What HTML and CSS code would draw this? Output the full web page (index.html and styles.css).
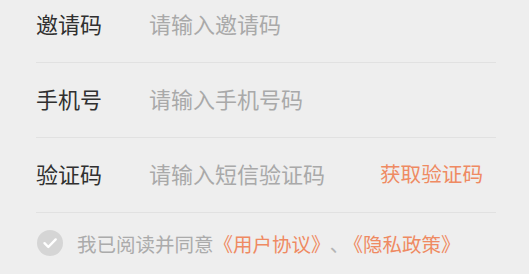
FILE: index.html
```html
<!DOCTYPE html>
<html lang="zh-CN">
<head>
<meta charset="utf-8">
<title>注册</title>
<link rel="stylesheet" href="styles.css">
</head>
<body>
<div class="form">
  <div class="row first">
    <label class="label">邀请码</label>
    <input class="field" type="text" placeholder="请输入邀请码">
  </div>
  <div class="row">
    <label class="label">手机号</label>
    <input class="field" type="tel" placeholder="请输入手机号码">
  </div>
  <div class="row">
    <label class="label">验证码</label>
    <input class="field" type="text" placeholder="请输入短信验证码">
    <span class="code-btn">获取验证码</span>
  </div>
  <div class="agree">
    <span class="check">
      <svg width="26" height="26" viewBox="0 0 26 26"><circle cx="13" cy="13" r="13" fill="#d5d5d5"/><path d="M7.5 13.2l3.8 3.8 7.4-7.6" fill="none" stroke="#fff" stroke-width="2.4" stroke-linecap="round" stroke-linejoin="round"/></svg>
    </span>
    <span class="agree-text">我已阅读并同意<span class="link">《用户协议》</span><span class="sep">、</span><span class="link">《隐私政策》</span></span>
  </div>
</div>
</body>
</html>
```

FILE: styles.css
```css
html, body {
  margin: 0;
  padding: 0;
  background: #eeeeee;
  height: 100%;
}
body {
  font-family: "Noto Sans CJK SC", "Noto Sans", sans-serif;
  overflow: hidden;
}
.form {
  padding: 0 33px 0 36px;
}
.row {
  display: flex;
  align-items: center;
  height: 74px;
  border-bottom: 1px solid #e1e1e1;
}
.row.first {
  margin-top: -12px;
}
.label {
  width: 113px;
  flex: none;
  font-size: 22px;
  line-height: 30px;
  padding-bottom: 4px;
  color: #303030;
}
.field {
  flex: 1;
  min-width: 0;
  border: none;
  outline: none;
  background: transparent;
  padding: 0 0 4px;
  font-family: inherit;
  font-size: 22px;
  line-height: 30px;
  color: #303030;
}
.field::placeholder {
  color: #a9a9a9;
}
.code-btn {
  flex: none;
  font-size: 20.6px;
  line-height: 30px;
  padding-bottom: 4px;
  color: #ef8a62;
  margin-right: 13px;
}
.agree {
  display: flex;
  align-items: center;
  height: 60px;
}
.check {
  display: flex;
  width: 26px;
  height: 26px;
  margin-left: 1px;
  margin-right: 14px;
}
.agree-text {
  font-size: 19.5px;
  color: #ababab;
  white-space: nowrap;
}
.link {
  color: #ef8a62;
}
.sep {
  color: #b5b5b5;
  margin: 0 4px 0 9px;
}
```
